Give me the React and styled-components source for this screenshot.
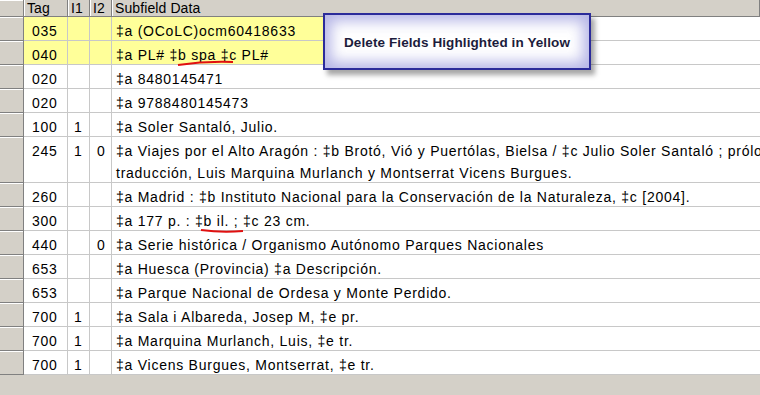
import React from "react";
import styled, { createGlobalStyle } from "styled-components";

const GlobalStyle = createGlobalStyle`
  body {
    margin: 0;
    background: #d4d0c8;
    font-family: "Liberation Sans", Arial, sans-serif;
  }
`;

const Screen = styled.div`
  position: relative;
  width: 760px;
  height: 395px;
  overflow: hidden;
  background: #d4d0c8;
`;

const Grid = styled.div`
  display: flex;
  flex-direction: column;
`;

const Row = styled.div`
  display: grid;
  grid-template-columns: 24px 44px 22px 22px 1fr;
  height: ${p => p.h || 24}px;
`;

const Gutter = styled.div`
  background: #d4d0c8;
  border-right: 1px solid #808080;
  border-bottom: 1px solid #808080;
  box-shadow: inset 0 1px 0 #ffffff;
`;

const HeadCell = styled.div`
  background: #d4d0c8;
  border-right: 1px solid #808080;
  border-bottom: 1px solid #808080;
  box-shadow: inset 1px 0 0 #ffffff;
  font-size: 14px;
  letter-spacing: 0.1px;
  color: #000;
  padding-left: 3px;
  line-height: 17px;
  white-space: nowrap;
  overflow: hidden;
`;

const Cell = styled.div`
  background: ${p => (p.hl ? "#ffff99" : "#ffffff")};
  border-right: 1px solid #c8c8c8;
  border-bottom: 1px solid #c8c8c8;
  font-size: 14px;
  letter-spacing: 0.75px;
  color: #000;
  padding: 3px 0 0 ${p => p.pl || 7}px;
  line-height: 22px;
  white-space: nowrap;
  overflow: hidden;
`;

const DataCell = styled(Cell)`
  border-right: none;
  padding-left: 4px;
  background: ${p =>
    p.hl
      ? "linear-gradient(to right, #ffff99 0 212px, #ffffff 212px)"
      : "#ffffff"};
`;

const Callout = styled.div`
  position: absolute;
  left: 323px;
  top: 13px;
  width: 268px;
  height: 57px;
  box-sizing: border-box;
  border: 2px solid #2b2b9a;
  background: #ffffff;
  box-shadow: inset 0 0 14px 6px rgba(120, 120, 210, 0.55),
    4px 5px 5px rgba(0, 0, 0, 0.35);
  display: flex;
  align-items: center;
  justify-content: center;
  padding-top: 2px;
  font-family: "Liberation Sans", Arial, sans-serif;
  font-weight: bold;
  font-size: 13.5px;
  letter-spacing: 0.1px;
  color: #1c1c3c;
`;

const Mark = styled.svg`
  position: absolute;
  overflow: visible;
`;

const rows = [
  { tag: "035", i1: "", i2: "", data: "‡a (OCoLC)ocm60418633", hl: true },
  { tag: "040", i1: "", i2: "", data: "‡a PL# ‡b spa ‡c PL#", hl: true },
  { tag: "020", i1: "", i2: "", data: "‡a 8480145471" },
  { tag: "020", i1: "", i2: "", data: "‡a 9788480145473" },
  { tag: "100", i1: "1", i2: "", data: "‡a Soler Santaló, Julio." },
  {
    tag: "245",
    i1: "1",
    i2: "0",
    data: [
      "‡a Viajes por el Alto Aragón : ‡b Brotó, Vió y Puertólas, Bielsa / ‡c Julio Soler Santaló ; prólogo y",
      "traducción, Luis Marquina Murlanch y Montserrat Vicens Burgues.",
    ],
    h: 46,
  },
  { tag: "260", i1: "", i2: "", data: "‡a Madrid : ‡b Instituto Nacional para la Conservación de la Naturaleza, ‡c [2004]." },
  { tag: "300", i1: "", i2: "", data: "‡a 177 p. : ‡b il. ; ‡c 23 cm." },
  { tag: "440", i1: "", i2: "0", data: "‡a Serie histórica / Organismo Autónomo Parques Nacionales" },
  { tag: "653", i1: "", i2: "", data: "‡a Huesca (Provincia) ‡a Descripción." },
  { tag: "653", i1: "", i2: "", data: "‡a Parque Nacional de Ordesa y Monte Perdido." },
  { tag: "700", i1: "1", i2: "", data: "‡a Sala i Albareda, Josep M, ‡e pr." },
  { tag: "700", i1: "1", i2: "", data: "‡a Marquina Murlanch, Luis, ‡e tr." },
  { tag: "700", i1: "1", i2: "", data: "‡a Vicens Burgues, Montserrat, ‡e tr." },
];

export default function App() {
  return (
    <Screen>
      <GlobalStyle />
      <Grid>
        <Row h={17}>
          <Gutter />
          <HeadCell>Tag</HeadCell>
          <HeadCell>I1</HeadCell>
          <HeadCell>I2</HeadCell>
          <HeadCell>Subfield Data</HeadCell>
        </Row>
        {rows.map((r, i) => (
          <Row key={i} h={r.h}>
            <Gutter />
            <Cell hl={r.hl} pl={8}>{r.tag}</Cell>
            <Cell hl={r.hl} pl={6}>{r.i1}</Cell>
            <Cell hl={r.hl} pl={7}>{r.i2}</Cell>
            <DataCell hl={r.hl}>
              {Array.isArray(r.data)
                ? r.data.map((line, j) => <div key={j}>{line}</div>)
                : r.data}
            </DataCell>
          </Row>
        ))}
      </Grid>
      <Callout>Delete Fields Highlighted in Yellow</Callout>
      <Mark style={{ left: 0, top: 0 }} width="760" height="395">
        <path d="M178 65 Q205 61 233 62" stroke="#e01010" strokeWidth="2" fill="none" />
        <path d="M201 230 Q222 233 243 231" stroke="#e01010" strokeWidth="2" fill="none" />
      </Mark>
    </Screen>
  );
}
